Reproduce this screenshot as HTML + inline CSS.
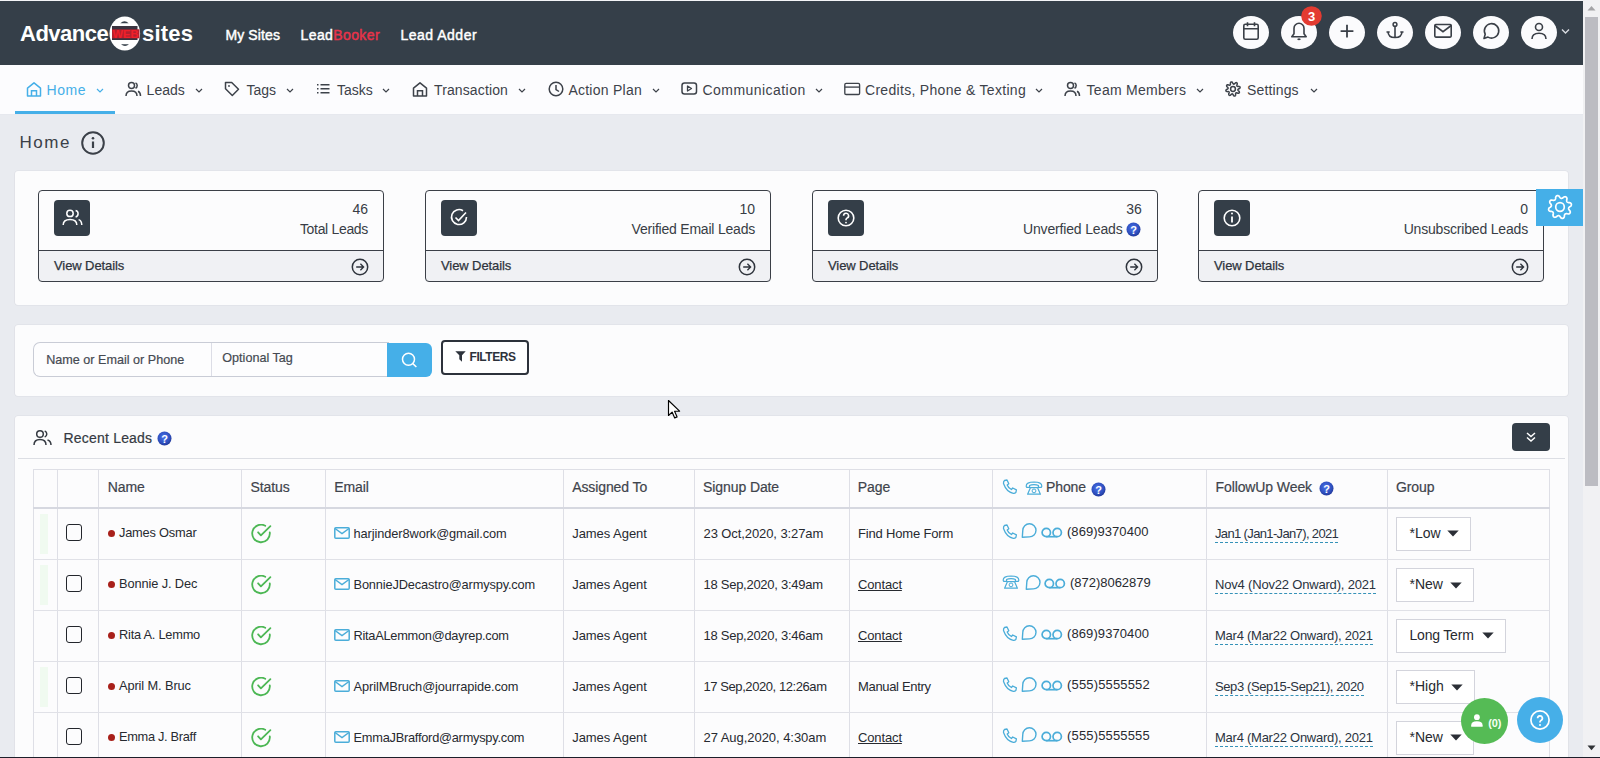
<!DOCTYPE html>
<html><head><meta charset="utf-8"><style>
html,body{margin:0;padding:0;width:1600px;height:758px;overflow:hidden;background:#e9ebf0;font-family:"Liberation Sans", sans-serif;}
.a{position:absolute;display:block}
.t{position:absolute;white-space:nowrap;line-height:1;}
.card{border:1.4px solid #3b3f47;border-radius:4px;box-sizing:border-box}
</style></head><body>
<svg width="0" height="0" style="position:absolute"><defs><radialGradient id="qg" cx="0.45" cy="0.4" r="0.6"><stop offset="0" stop-color="#4a72ea"/><stop offset="0.7" stop-color="#2f50c0"/><stop offset="1" stop-color="#22399a"/></radialGradient></defs></svg>
<div class="a" style="left:0px;top:1px;width:1583px;height:64px;background:#353f49"></div>
<div class="a" style="left:0px;top:0px;width:1583px;height:1px;background:#f4f5f8"></div>
<div class="t" style="left:20.00px;top:22.88px;font-size:22px;color:#fff;font-weight:700;letter-spacing:-0.5px">Advance</div>
<svg class="a" style="left:109px;top:16px;" width="32" height="35" viewBox="0 0 32 35" fill="none"><ellipse cx="15.8" cy="17.5" rx="15.3" ry="16.9" fill="#fff"/>
<rect x="3" y="10" width="25.5" height="14" fill="#3a3440"/>
<path d="M11.3 7.2Q15.5 3.2 19.7 7.2z" fill="#353f49"/>
<path d="M12 28.2Q16 31.6 20 28.2z" fill="#353f49"/>
<rect x="3" y="13.3" width="27.5" height="9" fill="#b3202e"/>
<text x="16.5" y="21.8" font-size="10.5" font-weight="700" fill="#f0202a" text-anchor="middle" font-family="Liberation Sans" textLength="26" lengthAdjust="spacingAndGlyphs">WEB</text></svg>
<div class="t" style="left:142.00px;top:22.88px;font-size:22px;color:#fff;font-weight:700;letter-spacing:0.2px">sites</div>
<div class="t" style="left:225.40px;top:27.95px;font-size:14px;color:#fff;font-weight:400;letter-spacing:0.132px;-webkit-text-stroke:0.45px #fff">My Sites</div>
<div class="t" style="left:300.60px;top:27.95px;font-size:14px;color:#fff;font-weight:400;letter-spacing:0.388px;-webkit-text-stroke:0.45px #fff">Lead<span style="color:#e8334a;-webkit-text-stroke:0.45px #e8334a">Booker</span></div>
<div class="t" style="left:400.40px;top:27.95px;font-size:14px;color:#fff;font-weight:400;letter-spacing:0.509px;-webkit-text-stroke:0.45px #fff">Lead Adder</div>
<svg class="a" style="left:1233px;top:16px;" width="36" height="33" viewBox="0 0 36 33" fill="none"><ellipse cx="18" cy="16.5" rx="18" ry="16.5" fill="#fbfbfd"/><rect x="10.8" y="8.2" width="14.4" height="15" rx="1.5" stroke="#3a3f47" stroke-width="1.6"/><path d="M10.8 12.8h14.4M14.5 6.2v4M21.5 6.2v4" stroke="#3a3f47" stroke-width="1.6"/></svg>
<svg class="a" style="left:1281px;top:16px;" width="36" height="33" viewBox="0 0 36 33" fill="none"><ellipse cx="18" cy="16.5" rx="18" ry="16.5" fill="#fbfbfd"/><path d="M10.8 20.8h14.4l-2.2-3v-5.5a5 5 0 0 0-10 0v5.5z" stroke="#3a3f47" stroke-width="1.6" stroke-linejoin="round"/><path d="M16.6 22.9q1.4 1 2.8 0" stroke="#3a3f47" stroke-width="1.6"/></svg>
<svg class="a" style="left:1329px;top:16px;" width="36" height="33" viewBox="0 0 36 33" fill="none"><ellipse cx="18" cy="16.5" rx="18" ry="16.5" fill="#fbfbfd"/><path d="M18 8.8v12.6M11.6 15.1h12.8" stroke="#3a3f47" stroke-width="1.8"/></svg>
<svg class="a" style="left:1377px;top:16px;" width="36" height="33" viewBox="0 0 36 33" fill="none"><ellipse cx="18" cy="16.5" rx="18" ry="16.5" fill="#fbfbfd"/><circle cx="18" cy="8.4" r="1.9" stroke="#3a3f47" stroke-width="1.5"/><path d="M18 10.4v11M11 15.2q0 6.3 7 6.3q7 0 7-6.3M9.5 16h3.2M23.3 16h3.2" stroke="#3a3f47" stroke-width="1.6"/></svg>
<svg class="a" style="left:1425px;top:16px;" width="36" height="33" viewBox="0 0 36 33" fill="none"><ellipse cx="18" cy="16.5" rx="18" ry="16.5" fill="#fbfbfd"/><rect x="9.8" y="8.5" width="16.4" height="12.6" rx="1" stroke="#3a3f47" stroke-width="1.6"/><path d="M9.8 9.5l8.2 6.2 8.2-6.2" stroke="#3a3f47" stroke-width="1.6"/></svg>
<svg class="a" style="left:1473px;top:16px;" width="36" height="33" viewBox="0 0 36 33" fill="none"><ellipse cx="18" cy="16.5" rx="18" ry="16.5" fill="#fbfbfd"/><path d="M11 22.5l1.2-4.3a7.2 7.2 0 1 1 2.8 2.9z" stroke="#3a3f47" stroke-width="1.6" stroke-linejoin="round"/></svg>
<svg class="a" style="left:1521px;top:16px;" width="36" height="33" viewBox="0 0 36 33" fill="none"><ellipse cx="18" cy="16.5" rx="18" ry="16.5" fill="#fbfbfd"/><circle cx="18" cy="11" r="3.5" stroke="#3a3f47" stroke-width="1.6"/><path d="M11 23q0-5.8 7-5.8t7 5.8" stroke="#3a3f47" stroke-width="1.6"/></svg>
<svg class="a" style="left:1301px;top:6px;" width="21" height="20" viewBox="0 0 21 20" fill="none"><ellipse cx="10.5" cy="10" rx="10.3" ry="9.8" fill="#e33b31"/><text x="10.5" y="15" font-size="13" font-weight="700" fill="#fff" text-anchor="middle" font-family="Liberation Sans">3</text></svg>
<svg class="a" style="left:1561px;top:28px;" width="9" height="7" viewBox="0 0 9 7" fill="none"><path d="M1 1.5l3.5 3.5 3.5-3.5" stroke="#d8dbe0" stroke-width="1.4"/></svg>
<div class="a" style="left:0px;top:65px;width:1583px;height:50px;background:#fcfcfe"></div>
<div class="a" style="left:0px;top:114px;width:1583px;height:1px;background:#e6e8ee"></div>
<div class="a" style="left:15px;top:111px;width:100px;height:3px;background:#45afe8"></div>
<svg class="a" style="left:26px;top:81px;" width="17" height="17" viewBox="0 0 17 17" fill="none"><path d="M1.5 7.2L8 1.8l6.5 5.4V15h-13z" stroke="#45afe8" stroke-width="1.5" stroke-linejoin="round"/><path d="M5.5 15V9.8h5V15" stroke="#45afe8" stroke-width="1.5"/></svg>
<div class="t" style="left:46.50px;top:82.85px;font-size:14px;color:#45afe8;font-weight:400;letter-spacing:0.6px">Home</div>
<svg class="a" style="left:96px;top:87.6px;" width="8" height="6" viewBox="0 0 8 6" fill="none"><path d="M1 1l3 3 3-3" stroke="#45afe8" stroke-width="1.2"/></svg>
<svg class="a" style="left:125px;top:81px;" width="17" height="17" viewBox="0 0 17 17" fill="none"><circle cx="6.5" cy="4.5" r="3" stroke="#3d424a" stroke-width="1.5"/><path d="M1 15q0-5 5.5-5t5.5 5M10.5 1.8a3 3 0 0 1 0 5.4M13 10.3q2.5 1 2.5 4.7" stroke="#3d424a" stroke-width="1.5"/></svg>
<div class="t" style="left:146.60px;top:82.85px;font-size:14px;color:#3d424a;font-weight:400;letter-spacing:0px">Leads</div>
<svg class="a" style="left:194.5px;top:87.6px;" width="8" height="6" viewBox="0 0 8 6" fill="none"><path d="M1 1l3 3 3-3" stroke="#3d424a" stroke-width="1.2"/></svg>
<svg class="a" style="left:224px;top:81px;" width="17" height="17" viewBox="0 0 17 17" fill="none"><path d="M1.5 1.5h6.2l6.8 6.8-6.2 6.2-6.8-6.8z" stroke="#3d424a" stroke-width="1.5" stroke-linejoin="round"/><circle cx="5" cy="5" r="0.9" fill="#3d424a"/></svg>
<div class="t" style="left:246.50px;top:82.85px;font-size:14px;color:#3d424a;font-weight:400;letter-spacing:0px">Tags</div>
<svg class="a" style="left:286px;top:87.6px;" width="8" height="6" viewBox="0 0 8 6" fill="none"><path d="M1 1l3 3 3-3" stroke="#3d424a" stroke-width="1.2"/></svg>
<svg class="a" style="left:316px;top:81px;" width="17" height="17" viewBox="0 0 17 17" fill="none"><path d="M4.5 3.7h9M4.5 7.7h9M4.5 11.7h9M1 3.7h1.5M1 7.7h1.5M1 11.7h1.5" stroke="#3d424a" stroke-width="1.5"/></svg>
<div class="t" style="left:337.00px;top:82.85px;font-size:14px;color:#3d424a;font-weight:400;letter-spacing:0px">Tasks</div>
<svg class="a" style="left:382px;top:87.6px;" width="8" height="6" viewBox="0 0 8 6" fill="none"><path d="M1 1l3 3 3-3" stroke="#3d424a" stroke-width="1.2"/></svg>
<svg class="a" style="left:412px;top:81px;" width="17" height="17" viewBox="0 0 17 17" fill="none"><path d="M1.5 7.2L8 1.8l6.5 5.4V15h-13z" stroke="#3d424a" stroke-width="1.5" stroke-linejoin="round"/><path d="M5.5 15V9.8h5V15" stroke="#3d424a" stroke-width="1.5"/></svg>
<div class="t" style="left:434.00px;top:82.85px;font-size:14px;color:#3d424a;font-weight:400;letter-spacing:0.12px">Transaction</div>
<svg class="a" style="left:518px;top:87.6px;" width="8" height="6" viewBox="0 0 8 6" fill="none"><path d="M1 1l3 3 3-3" stroke="#3d424a" stroke-width="1.2"/></svg>
<svg class="a" style="left:548px;top:81px;" width="17" height="17" viewBox="0 0 17 17" fill="none"><circle cx="8" cy="8" r="6.8" stroke="#3d424a" stroke-width="1.5"/><path d="M8 4v4.5l3 2" stroke="#3d424a" stroke-width="1.5"/></svg>
<div class="t" style="left:568.40px;top:82.85px;font-size:14px;color:#3d424a;font-weight:400;letter-spacing:0.25px">Action Plan</div>
<svg class="a" style="left:652px;top:87.6px;" width="8" height="6" viewBox="0 0 8 6" fill="none"><path d="M1 1l3 3 3-3" stroke="#3d424a" stroke-width="1.2"/></svg>
<svg class="a" style="left:681px;top:81px;" width="17" height="17" viewBox="0 0 17 17" fill="none"><rect x="1" y="2" width="14.5" height="11" rx="2.5" stroke="#3d424a" stroke-width="1.5"/><path d="M6.5 5v5l4-2.5z" stroke="#3d424a" stroke-width="1.3" stroke-linejoin="round"/></svg>
<div class="t" style="left:702.50px;top:82.85px;font-size:14px;color:#3d424a;font-weight:400;letter-spacing:0.45px">Communication</div>
<svg class="a" style="left:815px;top:87.6px;" width="8" height="6" viewBox="0 0 8 6" fill="none"><path d="M1 1l3 3 3-3" stroke="#3d424a" stroke-width="1.2"/></svg>
<svg class="a" style="left:844px;top:81px;" width="17" height="17" viewBox="0 0 17 17" fill="none"><rect x="0.8" y="2.4" width="14.8" height="11.1" rx="1.3" stroke="#3d424a" stroke-width="1.35"/><path d="M0.8 6.1h14.8" stroke="#3d424a" stroke-width="1.35"/></svg>
<div class="t" style="left:865.00px;top:82.85px;font-size:14px;color:#3d424a;font-weight:400;letter-spacing:0.3px">Credits, Phone &amp; Texting</div>
<svg class="a" style="left:1034.5px;top:87.6px;" width="8" height="6" viewBox="0 0 8 6" fill="none"><path d="M1 1l3 3 3-3" stroke="#3d424a" stroke-width="1.2"/></svg>
<svg class="a" style="left:1064px;top:81px;" width="17" height="17" viewBox="0 0 17 17" fill="none"><circle cx="6.5" cy="4.5" r="3" stroke="#3d424a" stroke-width="1.5"/><path d="M1 15q0-5 5.5-5t5.5 5M10.5 1.8a3 3 0 0 1 0 5.4M13 10.3q2.5 1 2.5 4.7" stroke="#3d424a" stroke-width="1.5"/></svg>
<div class="t" style="left:1086.60px;top:82.85px;font-size:14px;color:#3d424a;font-weight:400;letter-spacing:0.27px">Team Members</div>
<svg class="a" style="left:1196px;top:87.6px;" width="8" height="6" viewBox="0 0 8 6" fill="none"><path d="M1 1l3 3 3-3" stroke="#3d424a" stroke-width="1.2"/></svg>
<svg class="a" style="left:1225px;top:81px;" width="17" height="17" viewBox="0 0 17 17" fill="none"><circle cx="8" cy="8" r="2.4" stroke="#3d424a" stroke-width="1.5"/><path d="M13.50 8.00L13.22 8.20L13.02 8.39L12.89 8.58L12.84 8.77L12.87 8.97L12.96 9.19L13.13 9.45L13.38 9.75L13.89 10.17L14.19 10.56L14.34 10.92L14.39 11.25L14.35 11.55L14.22 11.81L14.02 12.02L13.74 12.17L13.40 12.25L12.98 12.25L12.35 12.02L11.89 11.89L11.54 11.83L11.27 11.83L11.05 11.87L10.88 11.97L10.76 12.12L10.67 12.35L10.60 12.65L10.57 13.04L10.63 13.70L10.56 14.19L10.42 14.55L10.22 14.82L9.97 15.00L9.70 15.10L9.41 15.10L9.11 15.01L8.81 14.82L8.51 14.53L8.23 13.91L8.00 13.50L7.80 13.22L7.61 13.02L7.42 12.89L7.23 12.84L7.03 12.87L6.81 12.96L6.55 13.13L6.25 13.38L5.83 13.89L5.44 14.19L5.08 14.34L4.75 14.39L4.45 14.35L4.19 14.22L3.98 14.02L3.83 13.74L3.75 13.40L3.75 12.98L3.98 12.35L4.11 11.89L4.17 11.54L4.17 11.27L4.13 11.05L4.03 10.88L3.88 10.76L3.65 10.67L3.35 10.60L2.96 10.57L2.30 10.63L1.81 10.56L1.45 10.42L1.18 10.22L1.00 9.97L0.90 9.70L0.90 9.41L0.99 9.11L1.18 8.81L1.47 8.51L2.09 8.23L2.50 8.00L2.78 7.80L2.98 7.61L3.11 7.42L3.16 7.23L3.13 7.03L3.04 6.81L2.87 6.55L2.62 6.25L2.11 5.83L1.81 5.44L1.66 5.08L1.61 4.75L1.65 4.45L1.78 4.19L1.98 3.98L2.26 3.83L2.60 3.75L3.02 3.75L3.65 3.98L4.11 4.11L4.46 4.17L4.73 4.17L4.95 4.13L5.12 4.03L5.24 3.88L5.33 3.65L5.40 3.35L5.43 2.96L5.37 2.30L5.44 1.81L5.58 1.45L5.78 1.18L6.03 1.00L6.30 0.90L6.59 0.90L6.89 0.99L7.19 1.18L7.49 1.47L7.77 2.09L8.00 2.50L8.20 2.78L8.39 2.98L8.58 3.11L8.77 3.16L8.97 3.13L9.19 3.04L9.45 2.87L9.75 2.62L10.17 2.11L10.56 1.81L10.92 1.66L11.25 1.61L11.55 1.65L11.81 1.78L12.02 1.98L12.17 2.26L12.25 2.60L12.25 3.02L12.02 3.65L11.89 4.11L11.83 4.46L11.83 4.73L11.87 4.95L11.97 5.12L12.12 5.24L12.35 5.33L12.65 5.40L13.04 5.43L13.70 5.37L14.19 5.44L14.55 5.58L14.82 5.78L15.00 6.03L15.10 6.30L15.10 6.59L15.01 6.89L14.82 7.19L14.53 7.49L13.91 7.77Z" stroke="#3d424a" stroke-width="1.5" stroke-linejoin="round"/></svg>
<div class="t" style="left:1247.00px;top:82.85px;font-size:14px;color:#3d424a;font-weight:400;letter-spacing:0.14px">Settings</div>
<svg class="a" style="left:1310px;top:87.6px;" width="8" height="6" viewBox="0 0 8 6" fill="none"><path d="M1 1l3 3 3-3" stroke="#3d424a" stroke-width="1.2"/></svg>
<div class="a" style="left:0px;top:115px;width:1583px;height:643px;background:#e9ebf0"></div>
<div class="t" style="left:19.50px;top:133.61px;font-size:17px;color:#3b4048;font-weight:400;letter-spacing:1.5px">Home</div>
<svg class="a" style="left:81px;top:131px;" width="24" height="24" viewBox="0 0 24 24" fill="none"><circle cx="12" cy="12" r="10.8" stroke="#3b4048" stroke-width="2"/><path d="M12 10.5v6.5" stroke="#3b4048" stroke-width="2.2"/><circle cx="12" cy="7.3" r="1.3" fill="#3b4048"/></svg>
<div class="a" style="left:15px;top:171px;width:1553px;height:134px;background:#fcfcfd;border-radius:3px;box-shadow:0 0 0 0.6px #dcdde3"></div>
<div class="a" style="left:38px;top:189.5px;width:346px;height:92px;background:#fcfcfd;border-radius:4px"></div>
<div class="a" style="left:38px;top:251px;width:346px;height:30.5px;background:#f0f1f4;border-radius:0 0 4px 4px"></div>
<div class="a" style="left:38px;top:250.2px;width:346px;height:1.3px;background:#3b3f47"></div>
<div class="a card" style="left:38px;top:189.5px;width:346px;height:92px"></div>
<svg class="a" style="left:53.5px;top:200px;" width="36" height="36" viewBox="0 0 36 36" fill="none"><rect width="36" height="36" rx="4" fill="#343e48"/><circle cx="16" cy="13.4" r="3.2" stroke="#fff" stroke-width="1.5"/><path d="M9.2 25q0-5.6 6.8-5.6t6.8 5.6M21.6 10.6a3.3 3.3 0 0 1 0 6.4M24.6 19.6q3 .9 3.2 5.4" stroke="#fff" stroke-width="1.5"/></svg>
<div class="t" style="right:1232.00px;top:202.35px;font-size:14px;color:#383d45;font-weight:400;">46</div>
<div class="t" style="right:1232.00px;top:222.05px;font-size:14px;color:#383d45;font-weight:400;letter-spacing:-0.321px;">Total Leads</div>
<div class="t" style="left:54.00px;top:259.10px;font-size:13px;color:#2f343c;font-weight:400;letter-spacing:-0.090px;-webkit-text-stroke:0.25px #2f343c">View Details</div>
<svg class="a" style="left:350.5px;top:257.5px;" width="18" height="18" viewBox="0 0 18 18" fill="none"><circle cx="9" cy="9" r="7.7" stroke="#2f343c" stroke-width="1.5"/><path d="M5.2 9h7.3M9.4 5.8L12.6 9l-3.2 3.2" stroke="#2f343c" stroke-width="1.35"/></svg>
<div class="a" style="left:425px;top:189.5px;width:346px;height:92px;background:#fcfcfd;border-radius:4px"></div>
<div class="a" style="left:425px;top:251px;width:346px;height:30.5px;background:#f0f1f4;border-radius:0 0 4px 4px"></div>
<div class="a" style="left:425px;top:250.2px;width:346px;height:1.3px;background:#3b3f47"></div>
<div class="a card" style="left:425px;top:189.5px;width:346px;height:92px"></div>
<svg class="a" style="left:440.5px;top:200px;" width="36" height="36" viewBox="0 0 36 36" fill="none"><rect width="36" height="36" rx="4" fill="#343e48"/><path d="M25.5 17a7.5 7.5 0 1 1-3.5-6.3" stroke="#fff" stroke-width="1.6"/><path d="M14.5 17.5l3 3 7.5-8" stroke="#fff" stroke-width="1.6"/></svg>
<div class="t" style="right:845.00px;top:202.35px;font-size:14px;color:#383d45;font-weight:400;">10</div>
<div class="t" style="right:845.00px;top:222.05px;font-size:14px;color:#383d45;font-weight:400;letter-spacing:-0.212px;">Verified Email Leads</div>
<div class="t" style="left:441.00px;top:259.10px;font-size:13px;color:#2f343c;font-weight:400;letter-spacing:-0.090px;-webkit-text-stroke:0.25px #2f343c">View Details</div>
<svg class="a" style="left:737.5px;top:257.5px;" width="18" height="18" viewBox="0 0 18 18" fill="none"><circle cx="9" cy="9" r="7.7" stroke="#2f343c" stroke-width="1.5"/><path d="M5.2 9h7.3M9.4 5.8L12.6 9l-3.2 3.2" stroke="#2f343c" stroke-width="1.35"/></svg>
<div class="a" style="left:812px;top:189.5px;width:346px;height:92px;background:#fcfcfd;border-radius:4px"></div>
<div class="a" style="left:812px;top:251px;width:346px;height:30.5px;background:#f0f1f4;border-radius:0 0 4px 4px"></div>
<div class="a" style="left:812px;top:250.2px;width:346px;height:1.3px;background:#3b3f47"></div>
<div class="a card" style="left:812px;top:189.5px;width:346px;height:92px"></div>
<svg class="a" style="left:827.5px;top:200px;" width="36" height="36" viewBox="0 0 36 36" fill="none"><rect width="36" height="36" rx="4" fill="#343e48"/><circle cx="18" cy="18" r="7.8" stroke="#fff" stroke-width="1.6"/><path d="M15.6 15.8a2.5 2.5 0 1 1 3.4 2.3q-1 .5-1 1.7v.5" stroke="#fff" stroke-width="1.6"/><circle cx="18" cy="22.6" r="0.9" fill="#fff"/></svg>
<svg class="a" style="left:1125.5px;top:222px;" width="15" height="15" viewBox="0 0 15 15" fill="none"><circle cx="7.5" cy="7.5" r="7" fill="url(#qg)"/><text x="7.5" y="11.8" font-size="11" font-weight="700" fill="#fff" text-anchor="middle" font-family="Liberation Sans">?</text></svg>
<div class="t" style="right:458.20px;top:202.35px;font-size:14px;color:#383d45;font-weight:400;">36</div>
<div class="t" style="right:477.50px;top:222.05px;font-size:14px;color:#383d45;font-weight:400;letter-spacing:-0.168px;">Unverfied Leads</div>
<div class="t" style="left:828.00px;top:259.10px;font-size:13px;color:#2f343c;font-weight:400;letter-spacing:-0.090px;-webkit-text-stroke:0.25px #2f343c">View Details</div>
<svg class="a" style="left:1124.5px;top:257.5px;" width="18" height="18" viewBox="0 0 18 18" fill="none"><circle cx="9" cy="9" r="7.7" stroke="#2f343c" stroke-width="1.5"/><path d="M5.2 9h7.3M9.4 5.8L12.6 9l-3.2 3.2" stroke="#2f343c" stroke-width="1.35"/></svg>
<div class="a" style="left:1198px;top:189.5px;width:346px;height:92px;background:#fcfcfd;border-radius:4px"></div>
<div class="a" style="left:1198px;top:251px;width:346px;height:30.5px;background:#f0f1f4;border-radius:0 0 4px 4px"></div>
<div class="a" style="left:1198px;top:250.2px;width:346px;height:1.3px;background:#3b3f47"></div>
<div class="a card" style="left:1198px;top:189.5px;width:346px;height:92px"></div>
<svg class="a" style="left:1213.5px;top:200px;" width="36" height="36" viewBox="0 0 36 36" fill="none"><rect width="36" height="36" rx="4" fill="#343e48"/><circle cx="18" cy="18" r="7.8" stroke="#fff" stroke-width="1.6"/><path d="M18 16.5v6" stroke="#fff" stroke-width="1.8"/><circle cx="18" cy="13.6" r="1" fill="#fff"/></svg>
<div class="t" style="right:72.00px;top:202.35px;font-size:14px;color:#383d45;font-weight:400;">0</div>
<div class="t" style="right:72.00px;top:222.05px;font-size:14px;color:#383d45;font-weight:400;letter-spacing:-0.184px;">Unsubscribed Leads</div>
<div class="t" style="left:1214.00px;top:259.10px;font-size:13px;color:#2f343c;font-weight:400;letter-spacing:-0.090px;-webkit-text-stroke:0.25px #2f343c">View Details</div>
<svg class="a" style="left:1510.5px;top:257.5px;" width="18" height="18" viewBox="0 0 18 18" fill="none"><circle cx="9" cy="9" r="7.7" stroke="#2f343c" stroke-width="1.5"/><path d="M5.2 9h7.3M9.4 5.8L12.6 9l-3.2 3.2" stroke="#2f343c" stroke-width="1.35"/></svg>
<div class="a" style="left:1536px;top:189px;width:47px;height:37px;background:#45afe8"></div>
<svg class="a" style="left:1546.5px;top:194.3px;" width="26" height="26" viewBox="0 0 26 26" fill="none"><circle cx="13" cy="13" r="4.3" stroke="#fff" stroke-width="1.7"/><path d="M22.45 13.00L22.09 13.36L21.84 13.70L21.67 14.03L21.60 14.36L21.61 14.71L21.71 15.09L21.89 15.51L22.17 15.98L22.78 16.61L23.12 17.19L23.26 17.73L23.28 18.24L23.18 18.70L22.97 19.11L22.66 19.46L22.26 19.73L21.77 19.91L21.18 19.99L20.32 19.77L19.68 19.68L19.18 19.68L18.76 19.74L18.41 19.86L18.12 20.04L17.88 20.30L17.68 20.63L17.51 21.06L17.38 21.59L17.36 22.47L17.19 23.12L16.91 23.60L16.56 23.97L16.17 24.23L15.73 24.37L15.27 24.40L14.79 24.31L14.31 24.09L13.84 23.73L13.39 22.97L13.00 22.45L12.64 22.09L12.30 21.84L11.97 21.67L11.64 21.60L11.29 21.61L10.91 21.71L10.49 21.89L10.02 22.17L9.39 22.78L8.81 23.12L8.27 23.26L7.76 23.28L7.30 23.18L6.89 22.97L6.54 22.66L6.27 22.26L6.09 21.77L6.01 21.18L6.23 20.32L6.32 19.68L6.32 19.18L6.26 18.76L6.14 18.41L5.96 18.12L5.70 17.88L5.37 17.68L4.94 17.51L4.41 17.38L3.53 17.36L2.88 17.19L2.40 16.91L2.03 16.56L1.77 16.17L1.63 15.73L1.60 15.27L1.69 14.79L1.91 14.31L2.27 13.84L3.03 13.39L3.55 13.00L3.91 12.64L4.16 12.30L4.33 11.97L4.40 11.64L4.39 11.29L4.29 10.91L4.11 10.49L3.83 10.02L3.22 9.39L2.88 8.81L2.74 8.27L2.72 7.76L2.82 7.30L3.03 6.89L3.34 6.54L3.74 6.27L4.23 6.09L4.82 6.01L5.68 6.23L6.32 6.32L6.82 6.32L7.24 6.26L7.59 6.14L7.88 5.96L8.12 5.70L8.32 5.37L8.49 4.94L8.62 4.41L8.64 3.53L8.81 2.88L9.09 2.40L9.44 2.03L9.83 1.77L10.27 1.63L10.73 1.60L11.21 1.69L11.69 1.91L12.16 2.27L12.61 3.03L13.00 3.55L13.36 3.91L13.70 4.16L14.03 4.33L14.36 4.40L14.71 4.39L15.09 4.29L15.51 4.11L15.98 3.83L16.61 3.22L17.19 2.88L17.73 2.74L18.24 2.72L18.70 2.82L19.11 3.03L19.46 3.34L19.73 3.74L19.91 4.23L19.99 4.82L19.77 5.68L19.68 6.32L19.68 6.82L19.74 7.24L19.86 7.59L20.04 7.88L20.30 8.12L20.63 8.32L21.06 8.49L21.59 8.62L22.47 8.64L23.12 8.81L23.60 9.09L23.97 9.44L24.23 9.83L24.37 10.27L24.40 10.73L24.31 11.21L24.09 11.69L23.73 12.16L22.97 12.61Z" stroke="#fff" stroke-width="1.7" stroke-linejoin="round"/></svg>
<div class="a" style="left:15px;top:325px;width:1553px;height:71px;background:#fcfcfd;border-radius:3px;box-shadow:0 0 0 0.6px #dcdde3"></div>
<div class="a" style="left:33px;top:342px;width:355px;height:33px;border:1px solid #c9ccd6;border-right:none;border-radius:7px 0 0 7px;background:#fdfdfe"></div>
<div class="a" style="left:211px;top:343px;width:1px;height:33px;background:#dcdde6"></div>
<div class="t" style="left:46.25px;top:353.83px;font-size:12.6px;color:#454a52;font-weight:400;-webkit-text-stroke:0.2px #454a52">Name or Email or Phone</div>
<div class="t" style="left:222.30px;top:352.13px;font-size:12.6px;color:#454a52;font-weight:400;-webkit-text-stroke:0.2px #454a52">Optional Tag</div>
<div class="a" style="left:387px;top:343px;width:45px;height:33.5px;background:#45afe8;border-radius:0 6px 6px 0"></div>
<svg class="a" style="left:399px;top:350px;" width="20" height="20" viewBox="0 0 20 20" fill="none"><circle cx="9.5" cy="9.3" r="6" stroke="#fff" stroke-width="1.5"/><path d="M13.8 13.6l3.6 3.4" stroke="#fff" stroke-width="1.5"/></svg>
<div class="a" style="left:441px;top:340px;width:84px;height:31px;border:2px solid #2d323b;border-radius:4px;background:#fff"></div>
<svg class="a" style="left:455px;top:351px;" width="11" height="11" viewBox="0 0 11 11" fill="none"><path d="M0.3 0.3h10.4L7 4.3v6.4L4.3 8.3V4.3z" fill="#2d323b"/></svg>
<div class="t" style="left:469.50px;top:350.64px;font-size:12px;color:#2d323b;font-weight:700;letter-spacing:-0.45px">FILTERS</div>
<div class="a" style="left:15px;top:416px;width:1553px;height:342px;background:#fcfcfd;border-radius:3px 3px 0 0;box-shadow:0 0 0 0.6px #dcdde3"></div>
<svg class="a" style="left:33px;top:429px;" width="20" height="17" viewBox="0 0 20 17" fill="none"><circle cx="7" cy="5" r="3.3" stroke="#353a42" stroke-width="1.5"/><path d="M1 16q0-5.5 6-5.5t6 5.5M11.7 2a3.2 3.2 0 0 1 0 6M14.5 11q3.5 1 3.5 5" stroke="#353a42" stroke-width="1.5"/></svg>
<div class="t" style="left:63.50px;top:430.75px;font-size:14px;color:#353a42;font-weight:400;-webkit-text-stroke:0.2px #353a42;letter-spacing:0.2px">Recent Leads</div>
<svg class="a" style="left:157px;top:431px;" width="15" height="15" viewBox="0 0 15 15" fill="none"><circle cx="7.5" cy="7.5" r="7" fill="url(#qg)"/><text x="7.5" y="11.8" font-size="11" font-weight="700" fill="#fff" text-anchor="middle" font-family="Liberation Sans">?</text></svg>
<div class="a" style="left:1512px;top:423px;width:38px;height:28px;background:#343e48;border-radius:4px"></div>
<svg class="a" style="left:1525px;top:431px;" width="12" height="12" viewBox="0 0 12 12" fill="none"><path d="M2 2l4 3.5 4-3.5M2 6.5l4 3.5 4-3.5" stroke="#fff" stroke-width="1.5"/></svg>
<div class="a" style="left:18px;top:458px;width:1547px;height:1px;background:#dcdee4"></div>
<div class="a" style="left:33px;top:469px;width:1px;height:289px;background:#dedfe6"></div>
<div class="a" style="left:57px;top:469px;width:1px;height:289px;background:#dedfe6"></div>
<div class="a" style="left:98px;top:469px;width:1px;height:289px;background:#dedfe6"></div>
<div class="a" style="left:241px;top:469px;width:1px;height:289px;background:#dedfe6"></div>
<div class="a" style="left:325px;top:469px;width:1px;height:289px;background:#dedfe6"></div>
<div class="a" style="left:563px;top:469px;width:1px;height:289px;background:#dedfe6"></div>
<div class="a" style="left:694px;top:469px;width:1px;height:289px;background:#dedfe6"></div>
<div class="a" style="left:849px;top:469px;width:1px;height:289px;background:#dedfe6"></div>
<div class="a" style="left:992px;top:469px;width:1px;height:289px;background:#dedfe6"></div>
<div class="a" style="left:1206px;top:469px;width:1px;height:289px;background:#dedfe6"></div>
<div class="a" style="left:1387px;top:469px;width:1px;height:289px;background:#dedfe6"></div>
<div class="a" style="left:1549px;top:469px;width:1px;height:289px;background:#dedfe6"></div>
<div class="a" style="left:33px;top:469px;width:1517px;height:1px;background:#dedfe6"></div>
<div class="a" style="left:33px;top:507px;width:1517px;height:2px;background:#d6d8e0"></div>
<div class="a" style="left:33px;top:559px;width:1517px;height:1px;background:#e0e1e7"></div>
<div class="a" style="left:33px;top:610px;width:1517px;height:1px;background:#e0e1e7"></div>
<div class="a" style="left:33px;top:661px;width:1517px;height:1px;background:#e0e1e7"></div>
<div class="a" style="left:33px;top:712px;width:1517px;height:1px;background:#e0e1e7"></div>
<div class="t" style="left:107.80px;top:480.05px;font-size:14px;color:#3f444c;font-weight:400;letter-spacing:-0.1px;-webkit-text-stroke:0.2px #3f444c">Name</div>
<div class="t" style="left:250.60px;top:480.05px;font-size:14px;color:#3f444c;font-weight:400;letter-spacing:-0.1px;-webkit-text-stroke:0.2px #3f444c">Status</div>
<div class="t" style="left:334.30px;top:480.05px;font-size:14px;color:#3f444c;font-weight:400;letter-spacing:-0.1px;-webkit-text-stroke:0.2px #3f444c">Email</div>
<div class="t" style="left:572.20px;top:480.05px;font-size:14px;color:#3f444c;font-weight:400;letter-spacing:-0.1px;-webkit-text-stroke:0.2px #3f444c">Assigned To</div>
<div class="t" style="left:703.10px;top:480.05px;font-size:14px;color:#3f444c;font-weight:400;letter-spacing:-0.1px;-webkit-text-stroke:0.2px #3f444c">Signup Date</div>
<div class="t" style="left:857.80px;top:480.05px;font-size:14px;color:#3f444c;font-weight:400;letter-spacing:-0.1px;-webkit-text-stroke:0.2px #3f444c">Page</div>
<div class="t" style="left:1046.00px;top:480.05px;font-size:14px;color:#3f444c;font-weight:400;letter-spacing:-0.1px;-webkit-text-stroke:0.2px #3f444c">Phone</div>
<div class="t" style="left:1215.50px;top:480.05px;font-size:14px;color:#3f444c;font-weight:400;letter-spacing:-0.1px;-webkit-text-stroke:0.2px #3f444c">FollowUp Week</div>
<div class="t" style="left:1396.00px;top:480.05px;font-size:14px;color:#3f444c;font-weight:400;letter-spacing:-0.1px;-webkit-text-stroke:0.2px #3f444c">Group</div>
<svg class="a" style="left:1001px;top:479px;" width="17" height="17" viewBox="0 0 17 17" fill="none"><path d="M3.5 1.5l2.5-.5 1.8 3.8-1.6 1.2q1.1 3 4.2 4.5l1.3-1.5 3.7 1.8-.5 2.5q-1 1.2-2.6 1Q5.5 13 2.5 4.5q-.2-1.8 1-3z" stroke="#4badd9" stroke-width="1.3" stroke-linejoin="round"/></svg>
<svg class="a" style="left:1024.5px;top:479.5px;" width="18" height="17" viewBox="0 0 18 17" fill="none"><path d="M1.2 6.2q-.3-4 7.8-4.2q8.1.2 7.8 4.2l-.4 1.2h-3v-1.8q-1.5-.9-4.4-.9t-4.4.9v1.8h-3z" stroke="#4badd9" stroke-width="1.2" stroke-linejoin="round"/><path d="M5.5 7.6L2.6 14.2h12.8L12.5 7.6z" stroke="#4badd9" stroke-width="1.2" stroke-linejoin="round"/><circle cx="9" cy="10.9" r="1.9" stroke="#4badd9" stroke-width="1"/></svg>
<svg class="a" style="left:1090.5px;top:481.5px;" width="15" height="15" viewBox="0 0 15 15" fill="none"><circle cx="7.5" cy="7.5" r="7" fill="url(#qg)"/><text x="7.5" y="11.8" font-size="11" font-weight="700" fill="#fff" text-anchor="middle" font-family="Liberation Sans">?</text></svg>
<svg class="a" style="left:1319px;top:481px;" width="15" height="15" viewBox="0 0 15 15" fill="none"><circle cx="7.5" cy="7.5" r="7" fill="url(#qg)"/><text x="7.5" y="11.8" font-size="11" font-weight="700" fill="#fff" text-anchor="middle" font-family="Liberation Sans">?</text></svg>
<div class="a" style="left:40px;top:514px;width:8px;height:40px;background:#f0faf0"></div>
<div class="a" style="left:66px;top:524.3px;width:16.2px;height:16.5px;box-sizing:border-box;border:1.7px solid #23262c;border-radius:3px"></div>
<div class="a" style="left:107.5px;top:530px;width:7px;height:7px;background:#a8201a;border-radius:50%"></div>
<div class="t" style="left:119.00px;top:526.86px;font-size:12.8px;color:#272a30;font-weight:400;letter-spacing:-0.196px;">James Osmar</div>
<svg class="a" style="left:251px;top:524px;" width="22" height="21" viewBox="0 0 22 21" fill="none"><path d="M18.77 8.4A8.8 8.8 0 1 1 14.23 1.73" stroke="#4cb754" stroke-width="1.8" stroke-linecap="round"/><path d="M7.1 8.3l2.8 3 9.5-9.2" stroke="#4cb754" stroke-width="1.8" stroke-linecap="round" stroke-linejoin="round"/></svg>
<svg class="a" style="left:334px;top:527px;" width="16" height="12" viewBox="0 0 16 12" fill="none"><rect x="0.8" y="0.8" width="14.4" height="10.4" rx="1" stroke="#4badd9" stroke-width="1.5"/><path d="M1 1.5l7 5 7-5" stroke="#4badd9" stroke-width="1.5"/></svg>
<div class="t" style="left:353.50px;top:528.06px;font-size:12.8px;color:#272a30;font-weight:400;letter-spacing:-0.090px;">harjinder8work@gmail.com</div>
<div class="t" style="left:572.20px;top:526.70px;font-size:13px;color:#272a30;font-weight:400;letter-spacing:-0.046px;">James Agent</div>
<div class="t" style="left:703.50px;top:526.70px;font-size:13px;color:#272a30;font-weight:400;letter-spacing:-0.090px;">23 Oct,2020, 3:27am</div>
<div class="t" style="left:858.00px;top:526.70px;font-size:13px;color:#272a30;font-weight:400;letter-spacing:-0.178px;">Find Home Form</div>
<svg class="a" style="left:1001px;top:524px;" width="17" height="17" viewBox="0 0 17 17" fill="none"><path d="M3.5 1.5l2.5-.5 1.8 3.8-1.6 1.2q1.1 3 4.2 4.5l1.3-1.5 3.7 1.8-.5 2.5q-1 1.2-2.6 1Q5.5 13 2.5 4.5q-.2-1.8 1-3z" stroke="#4badd9" stroke-width="1.3" stroke-linejoin="round"/></svg>
<svg class="a" style="left:1021px;top:522px;" width="17" height="17" viewBox="0 0 17 17" fill="none"><path d="M1.3 15.2L1.8 8.3A6.6 6.6 0 1 1 8.4 14.9Z" stroke="#4badd9" stroke-width="1.4" stroke-linejoin="round"/></svg>
<svg class="a" style="left:1041px;top:527px;" width="22" height="11" viewBox="0 0 22 11" fill="none"><circle cx="5.3" cy="5.5" r="4.2" stroke="#4badd9" stroke-width="1.7"/><circle cx="16.2" cy="5.5" r="4.2" stroke="#4badd9" stroke-width="1.7"/><path d="M5.3 9.7h10.9" stroke="#4badd9" stroke-width="1.7"/></svg>
<div class="t" style="left:1067.00px;top:524.50px;font-size:13px;color:#272a30;font-weight:400;letter-spacing:0.040px;">(869)9370400</div>
<div class="t" style="left:1215.00px;top:526.70px;font-size:13px;color:#2a3340;font-weight:400;letter-spacing:-0.643px;"><span style="border-bottom:1.5px dashed #3592b8;padding-bottom:1px">Jan1 (Jan1-Jan7), 2021</span></div>
<div class="a" style="left:1396px;top:516.5px;width:75px;height:34px;border:1px solid #d3d4dc;box-sizing:border-box;background:#fff"></div>
<div class="t" style="left:1409.50px;top:525.85px;font-size:14px;color:#272a30;font-weight:400;">*Low</div>
<svg class="a" style="left:1447px;top:530px;" width="12" height="7" viewBox="0 0 12 7" fill="none"><path d="M0.3 0.5h11.4L6 6.5z" fill="#2b2f36"/></svg>
<div class="a" style="left:40px;top:565px;width:8px;height:40px;background:#f0faf0"></div>
<div class="a" style="left:66px;top:575.3px;width:16.2px;height:16.5px;box-sizing:border-box;border:1.7px solid #23262c;border-radius:3px"></div>
<div class="a" style="left:107.5px;top:581px;width:7px;height:7px;background:#a8201a;border-radius:50%"></div>
<div class="t" style="left:119.00px;top:577.86px;font-size:12.8px;color:#272a30;font-weight:400;letter-spacing:-0.107px;">Bonnie J. Dec</div>
<svg class="a" style="left:251px;top:575px;" width="22" height="21" viewBox="0 0 22 21" fill="none"><path d="M18.77 8.4A8.8 8.8 0 1 1 14.23 1.73" stroke="#4cb754" stroke-width="1.8" stroke-linecap="round"/><path d="M7.1 8.3l2.8 3 9.5-9.2" stroke="#4cb754" stroke-width="1.8" stroke-linecap="round" stroke-linejoin="round"/></svg>
<svg class="a" style="left:334px;top:578px;" width="16" height="12" viewBox="0 0 16 12" fill="none"><rect x="0.8" y="0.8" width="14.4" height="10.4" rx="1" stroke="#4badd9" stroke-width="1.5"/><path d="M1 1.5l7 5 7-5" stroke="#4badd9" stroke-width="1.5"/></svg>
<div class="t" style="left:353.50px;top:579.06px;font-size:12.8px;color:#272a30;font-weight:400;letter-spacing:-0.147px;">BonnieJDecastro@armyspy.com</div>
<div class="t" style="left:572.20px;top:577.70px;font-size:13px;color:#272a30;font-weight:400;letter-spacing:-0.046px;">James Agent</div>
<div class="t" style="left:703.50px;top:577.70px;font-size:13px;color:#272a30;font-weight:400;letter-spacing:-0.268px;">18 Sep,2020, 3:49am</div>
<div class="t" style="left:858.00px;top:577.70px;font-size:13px;color:#272a30;font-weight:400;letter-spacing:-0.134px;text-decoration:underline;text-underline-offset:1px">Contact</div>
<svg class="a" style="left:1001.5px;top:574px;" width="18" height="17" viewBox="0 0 18 17" fill="none"><path d="M1.2 6.2q-.3-4 7.8-4.2q8.1.2 7.8 4.2l-.4 1.2h-3v-1.8q-1.5-.9-4.4-.9t-4.4.9v1.8h-3z" stroke="#4badd9" stroke-width="1.2" stroke-linejoin="round"/><path d="M5.5 7.6L2.6 14.2h12.8L12.5 7.6z" stroke="#4badd9" stroke-width="1.2" stroke-linejoin="round"/><circle cx="9" cy="10.9" r="1.9" stroke="#4badd9" stroke-width="1"/></svg>
<svg class="a" style="left:1024.5px;top:574px;" width="17" height="17" viewBox="0 0 17 17" fill="none"><path d="M1.3 15.2L1.8 8.3A6.6 6.6 0 1 1 8.4 14.9Z" stroke="#4badd9" stroke-width="1.4" stroke-linejoin="round"/></svg>
<svg class="a" style="left:1044px;top:578px;" width="22" height="11" viewBox="0 0 22 11" fill="none"><circle cx="5.3" cy="5.5" r="4.2" stroke="#4badd9" stroke-width="1.7"/><circle cx="16.2" cy="5.5" r="4.2" stroke="#4badd9" stroke-width="1.7"/><path d="M5.3 9.7h10.9" stroke="#4badd9" stroke-width="1.7"/></svg>
<div class="t" style="left:1070.00px;top:575.50px;font-size:13px;color:#272a30;font-weight:400;letter-spacing:-0.024px;">(872)8062879</div>
<div class="t" style="left:1215.00px;top:577.70px;font-size:13px;color:#2a3340;font-weight:400;letter-spacing:-0.186px;"><span style="border-bottom:1.5px dashed #3592b8;padding-bottom:1px">Nov4 (Nov22 Onward), 2021</span></div>
<div class="a" style="left:1396px;top:567.5px;width:78px;height:34px;border:1px solid #d3d4dc;box-sizing:border-box;background:#fff"></div>
<div class="t" style="left:1409.50px;top:576.85px;font-size:14px;color:#272a30;font-weight:400;">*New</div>
<svg class="a" style="left:1450px;top:582px;" width="12" height="7" viewBox="0 0 12 7" fill="none"><path d="M0.3 0.5h11.4L6 6.5z" fill="#2b2f36"/></svg>
<div class="a" style="left:66px;top:626.3px;width:16.2px;height:16.5px;box-sizing:border-box;border:1.7px solid #23262c;border-radius:3px"></div>
<div class="a" style="left:107.5px;top:632px;width:7px;height:7px;background:#a8201a;border-radius:50%"></div>
<div class="t" style="left:119.00px;top:628.86px;font-size:12.8px;color:#272a30;font-weight:400;letter-spacing:-0.229px;">Rita A. Lemmo</div>
<svg class="a" style="left:251px;top:626px;" width="22" height="21" viewBox="0 0 22 21" fill="none"><path d="M18.77 8.4A8.8 8.8 0 1 1 14.23 1.73" stroke="#4cb754" stroke-width="1.8" stroke-linecap="round"/><path d="M7.1 8.3l2.8 3 9.5-9.2" stroke="#4cb754" stroke-width="1.8" stroke-linecap="round" stroke-linejoin="round"/></svg>
<svg class="a" style="left:334px;top:629px;" width="16" height="12" viewBox="0 0 16 12" fill="none"><rect x="0.8" y="0.8" width="14.4" height="10.4" rx="1" stroke="#4badd9" stroke-width="1.5"/><path d="M1 1.5l7 5 7-5" stroke="#4badd9" stroke-width="1.5"/></svg>
<div class="t" style="left:353.50px;top:630.06px;font-size:12.8px;color:#272a30;font-weight:400;letter-spacing:-0.260px;">RitaALemmon@dayrep.com</div>
<div class="t" style="left:572.20px;top:628.70px;font-size:13px;color:#272a30;font-weight:400;letter-spacing:-0.046px;">James Agent</div>
<div class="t" style="left:703.50px;top:628.70px;font-size:13px;color:#272a30;font-weight:400;letter-spacing:-0.268px;">18 Sep,2020, 3:46am</div>
<div class="t" style="left:858.00px;top:628.70px;font-size:13px;color:#272a30;font-weight:400;letter-spacing:-0.134px;text-decoration:underline;text-underline-offset:1px">Contact</div>
<svg class="a" style="left:1001px;top:626px;" width="17" height="17" viewBox="0 0 17 17" fill="none"><path d="M3.5 1.5l2.5-.5 1.8 3.8-1.6 1.2q1.1 3 4.2 4.5l1.3-1.5 3.7 1.8-.5 2.5q-1 1.2-2.6 1Q5.5 13 2.5 4.5q-.2-1.8 1-3z" stroke="#4badd9" stroke-width="1.3" stroke-linejoin="round"/></svg>
<svg class="a" style="left:1021px;top:624px;" width="17" height="17" viewBox="0 0 17 17" fill="none"><path d="M1.3 15.2L1.8 8.3A6.6 6.6 0 1 1 8.4 14.9Z" stroke="#4badd9" stroke-width="1.4" stroke-linejoin="round"/></svg>
<svg class="a" style="left:1041px;top:629px;" width="22" height="11" viewBox="0 0 22 11" fill="none"><circle cx="5.3" cy="5.5" r="4.2" stroke="#4badd9" stroke-width="1.7"/><circle cx="16.2" cy="5.5" r="4.2" stroke="#4badd9" stroke-width="1.7"/><path d="M5.3 9.7h10.9" stroke="#4badd9" stroke-width="1.7"/></svg>
<div class="t" style="left:1067.00px;top:626.50px;font-size:13px;color:#272a30;font-weight:400;letter-spacing:0.095px;">(869)9370400</div>
<div class="t" style="left:1215.00px;top:628.70px;font-size:13px;color:#2a3340;font-weight:400;letter-spacing:-0.250px;"><span style="border-bottom:1.5px dashed #3592b8;padding-bottom:1px">Mar4 (Mar22 Onward), 2021</span></div>
<div class="a" style="left:1396px;top:618.5px;width:110px;height:34px;border:1px solid #d3d4dc;box-sizing:border-box;background:#fff"></div>
<div class="t" style="left:1409.50px;top:627.85px;font-size:14px;color:#272a30;font-weight:400;letter-spacing:-0.2px">Long Term</div>
<svg class="a" style="left:1482px;top:632px;" width="12" height="7" viewBox="0 0 12 7" fill="none"><path d="M0.3 0.5h11.4L6 6.5z" fill="#2b2f36"/></svg>
<div class="a" style="left:40px;top:667px;width:8px;height:40px;background:#f0faf0"></div>
<div class="a" style="left:66px;top:677.3px;width:16.2px;height:16.5px;box-sizing:border-box;border:1.7px solid #23262c;border-radius:3px"></div>
<div class="a" style="left:107.5px;top:683px;width:7px;height:7px;background:#a8201a;border-radius:50%"></div>
<div class="t" style="left:119.00px;top:679.86px;font-size:12.8px;color:#272a30;font-weight:400;letter-spacing:-0.105px;">April M. Bruc</div>
<svg class="a" style="left:251px;top:677px;" width="22" height="21" viewBox="0 0 22 21" fill="none"><path d="M18.77 8.4A8.8 8.8 0 1 1 14.23 1.73" stroke="#4cb754" stroke-width="1.8" stroke-linecap="round"/><path d="M7.1 8.3l2.8 3 9.5-9.2" stroke="#4cb754" stroke-width="1.8" stroke-linecap="round" stroke-linejoin="round"/></svg>
<svg class="a" style="left:334px;top:680px;" width="16" height="12" viewBox="0 0 16 12" fill="none"><rect x="0.8" y="0.8" width="14.4" height="10.4" rx="1" stroke="#4badd9" stroke-width="1.5"/><path d="M1 1.5l7 5 7-5" stroke="#4badd9" stroke-width="1.5"/></svg>
<div class="t" style="left:353.50px;top:681.06px;font-size:12.8px;color:#272a30;font-weight:400;letter-spacing:-0.095px;">AprilMBruch@jourrapide.com</div>
<div class="t" style="left:572.20px;top:679.70px;font-size:13px;color:#272a30;font-weight:400;letter-spacing:-0.046px;">James Agent</div>
<div class="t" style="left:703.50px;top:679.70px;font-size:13px;color:#272a30;font-weight:400;letter-spacing:-0.424px;">17 Sep,2020, 12:26am</div>
<div class="t" style="left:858.00px;top:679.70px;font-size:13px;color:#272a30;font-weight:400;letter-spacing:-0.326px;">Manual Entry</div>
<svg class="a" style="left:1001px;top:677px;" width="17" height="17" viewBox="0 0 17 17" fill="none"><path d="M3.5 1.5l2.5-.5 1.8 3.8-1.6 1.2q1.1 3 4.2 4.5l1.3-1.5 3.7 1.8-.5 2.5q-1 1.2-2.6 1Q5.5 13 2.5 4.5q-.2-1.8 1-3z" stroke="#4badd9" stroke-width="1.3" stroke-linejoin="round"/></svg>
<svg class="a" style="left:1021px;top:676px;" width="17" height="17" viewBox="0 0 17 17" fill="none"><path d="M1.3 15.2L1.8 8.3A6.6 6.6 0 1 1 8.4 14.9Z" stroke="#4badd9" stroke-width="1.4" stroke-linejoin="round"/></svg>
<svg class="a" style="left:1041px;top:680px;" width="22" height="11" viewBox="0 0 22 11" fill="none"><circle cx="5.3" cy="5.5" r="4.2" stroke="#4badd9" stroke-width="1.7"/><circle cx="16.2" cy="5.5" r="4.2" stroke="#4badd9" stroke-width="1.7"/><path d="M5.3 9.7h10.9" stroke="#4badd9" stroke-width="1.7"/></svg>
<div class="t" style="left:1067.00px;top:677.50px;font-size:13px;color:#272a30;font-weight:400;letter-spacing:0.158px;">(555)5555552</div>
<div class="t" style="left:1215.00px;top:679.70px;font-size:13px;color:#2a3340;font-weight:400;letter-spacing:-0.404px;"><span style="border-bottom:1.5px dashed #3592b8;padding-bottom:1px">Sep3 (Sep15-Sep21), 2020</span></div>
<div class="a" style="left:1396px;top:669.5px;width:79px;height:34px;border:1px solid #d3d4dc;box-sizing:border-box;background:#fff"></div>
<div class="t" style="left:1409.50px;top:678.85px;font-size:14px;color:#272a30;font-weight:400;">*High</div>
<svg class="a" style="left:1451px;top:684px;" width="12" height="7" viewBox="0 0 12 7" fill="none"><path d="M0.3 0.5h11.4L6 6.5z" fill="#2b2f36"/></svg>
<div class="a" style="left:66px;top:728.3px;width:16.2px;height:16.5px;box-sizing:border-box;border:1.7px solid #23262c;border-radius:3px"></div>
<div class="a" style="left:107.5px;top:734px;width:7px;height:7px;background:#a8201a;border-radius:50%"></div>
<div class="t" style="left:119.00px;top:730.86px;font-size:12.8px;color:#272a30;font-weight:400;letter-spacing:-0.304px;">Emma J. Braff</div>
<svg class="a" style="left:251px;top:728px;" width="22" height="21" viewBox="0 0 22 21" fill="none"><path d="M18.77 8.4A8.8 8.8 0 1 1 14.23 1.73" stroke="#4cb754" stroke-width="1.8" stroke-linecap="round"/><path d="M7.1 8.3l2.8 3 9.5-9.2" stroke="#4cb754" stroke-width="1.8" stroke-linecap="round" stroke-linejoin="round"/></svg>
<svg class="a" style="left:334px;top:731px;" width="16" height="12" viewBox="0 0 16 12" fill="none"><rect x="0.8" y="0.8" width="14.4" height="10.4" rx="1" stroke="#4badd9" stroke-width="1.5"/><path d="M1 1.5l7 5 7-5" stroke="#4badd9" stroke-width="1.5"/></svg>
<div class="t" style="left:353.50px;top:732.06px;font-size:12.8px;color:#272a30;font-weight:400;letter-spacing:-0.243px;">EmmaJBrafford@armyspy.com</div>
<div class="t" style="left:572.20px;top:730.70px;font-size:13px;color:#272a30;font-weight:400;letter-spacing:-0.046px;">James Agent</div>
<div class="t" style="left:703.50px;top:730.70px;font-size:13px;color:#272a30;font-weight:400;letter-spacing:-0.045px;">27 Aug,2020, 4:30am</div>
<div class="t" style="left:858.00px;top:730.70px;font-size:13px;color:#272a30;font-weight:400;letter-spacing:-0.134px;text-decoration:underline;text-underline-offset:1px">Contact</div>
<svg class="a" style="left:1001px;top:728px;" width="17" height="17" viewBox="0 0 17 17" fill="none"><path d="M3.5 1.5l2.5-.5 1.8 3.8-1.6 1.2q1.1 3 4.2 4.5l1.3-1.5 3.7 1.8-.5 2.5q-1 1.2-2.6 1Q5.5 13 2.5 4.5q-.2-1.8 1-3z" stroke="#4badd9" stroke-width="1.3" stroke-linejoin="round"/></svg>
<svg class="a" style="left:1021px;top:726px;" width="17" height="17" viewBox="0 0 17 17" fill="none"><path d="M1.3 15.2L1.8 8.3A6.6 6.6 0 1 1 8.4 14.9Z" stroke="#4badd9" stroke-width="1.4" stroke-linejoin="round"/></svg>
<svg class="a" style="left:1041px;top:731px;" width="22" height="11" viewBox="0 0 22 11" fill="none"><circle cx="5.3" cy="5.5" r="4.2" stroke="#4badd9" stroke-width="1.7"/><circle cx="16.2" cy="5.5" r="4.2" stroke="#4badd9" stroke-width="1.7"/><path d="M5.3 9.7h10.9" stroke="#4badd9" stroke-width="1.7"/></svg>
<div class="t" style="left:1067.00px;top:728.50px;font-size:13px;color:#272a30;font-weight:400;letter-spacing:0.158px;">(555)5555555</div>
<div class="t" style="left:1215.00px;top:730.70px;font-size:13px;color:#2a3340;font-weight:400;letter-spacing:-0.250px;"><span style="border-bottom:1.5px dashed #3592b8;padding-bottom:1px">Mar4 (Mar22 Onward), 2021</span></div>
<div class="a" style="left:1396px;top:720.5px;width:78px;height:34px;border:1px solid #d3d4dc;box-sizing:border-box;background:#fff"></div>
<div class="t" style="left:1409.50px;top:729.85px;font-size:14px;color:#272a30;font-weight:400;">*New</div>
<svg class="a" style="left:1450px;top:734px;" width="12" height="7" viewBox="0 0 12 7" fill="none"><path d="M0.3 0.5h11.4L6 6.5z" fill="#2b2f36"/></svg>
<div class="a" style="left:1461px;top:698px;width:47px;height:46px;background:#55bb55;border-radius:50%"></div>
<svg class="a" style="left:1470px;top:712px;" width="16" height="16" viewBox="0 0 16 16" fill="none"><circle cx="6.9" cy="5.2" r="2.9" fill="#fff"/><path d="M1.2 14.8v-1.6q0-4 5.7-4t5.7 4v1.6z" fill="#fff"/></svg>
<div class="t" style="left:1488.30px;top:718.29px;font-size:11px;color:#f4fff4;font-weight:700;letter-spacing:-0.122px;">(0)</div>
<div class="a" style="left:1517px;top:697px;width:46px;height:46px;background:#46afe8;border-radius:50%"></div>
<svg class="a" style="left:1528px;top:708px;" width="24" height="24" viewBox="0 0 24 24" fill="none"><circle cx="12" cy="12" r="9.1" stroke="#fff" stroke-width="1.7"/><path d="M9.6 10.2a2.4 2.4 0 1 1 3.4 2.2q-1 .45-1 1.5v.6" stroke="#fff" stroke-width="1.7"/><circle cx="12" cy="17" r="1" fill="#fff"/></svg>
<svg class="a" style="left:667px;top:399px;" width="14" height="21" viewBox="0 0 14 21" fill="none"><path d="M1.5 1.5v15l3.6-3.4 2.6 5.8 2.4-1-2.5-5.7h5z" fill="#fff" stroke="#000" stroke-width="1.15" stroke-linejoin="round"/></svg>
<div class="a" style="left:1583px;top:0px;width:17px;height:757px;background:#f1f1f3"></div>
<div class="a" style="left:1585px;top:17px;width:13px;height:469px;background:#bcbcc2"></div>
<svg class="a" style="left:1587px;top:5px;" width="9" height="6" viewBox="0 0 9 6" fill="none"><path d="M0.5 5.5L4.5 1l4 4.5z" fill="#a3a3a6"/></svg>
<svg class="a" style="left:1587px;top:745px;" width="9" height="6" viewBox="0 0 9 6" fill="none"><path d="M0.5 0.5L4.5 5.2l4-4.7z" fill="#303236"/></svg>
<div class="a" style="left:0px;top:757px;width:1600px;height:1px;background:#1d1f2a"></div>
</body></html>
